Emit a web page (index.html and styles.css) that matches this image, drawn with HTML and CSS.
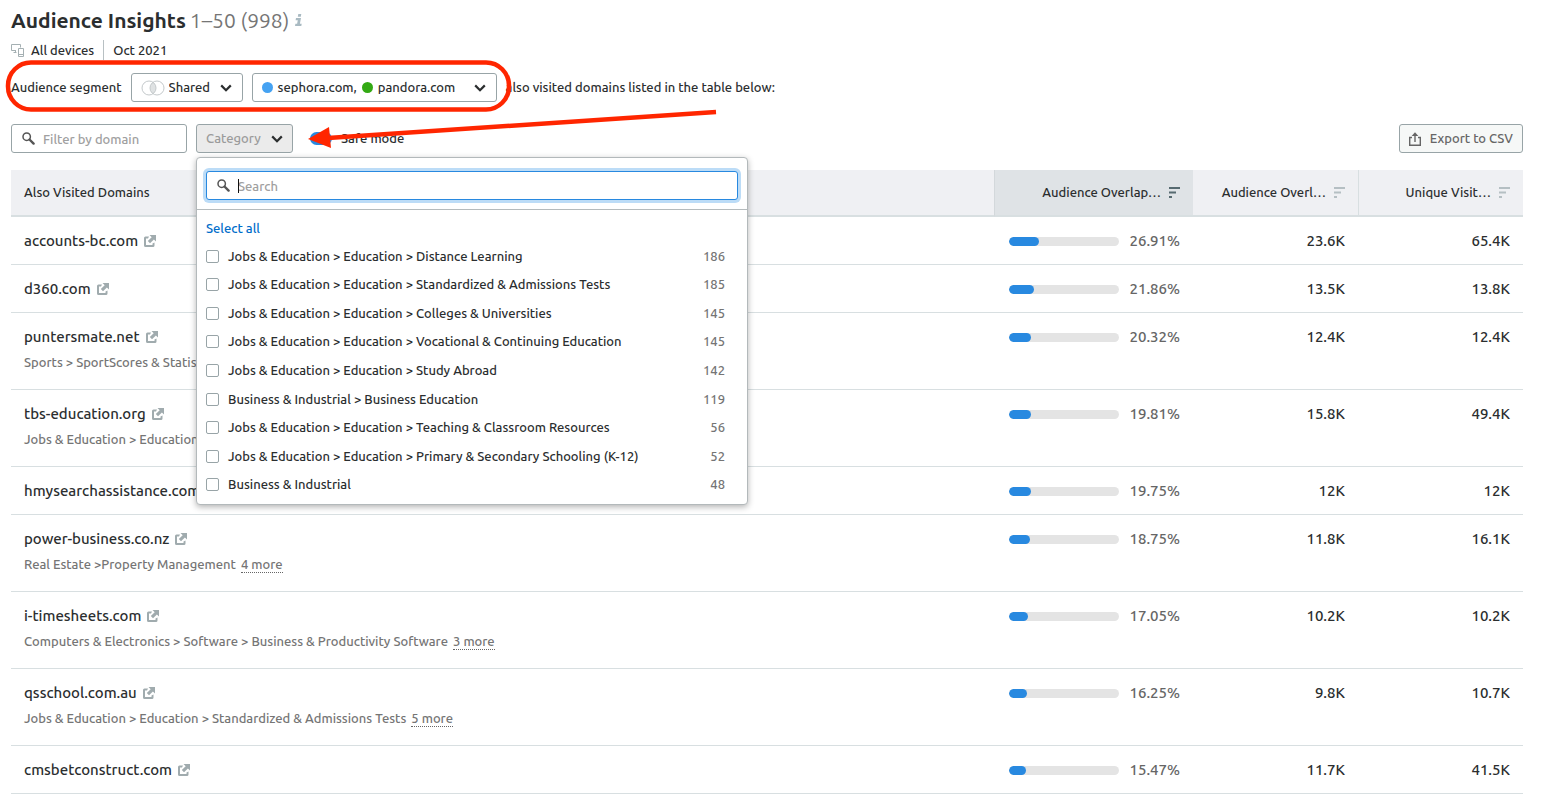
FILE: index.html
```html
<!DOCTYPE html>
<html lang="en">
<head>
<meta charset="utf-8">
<title>Audience Insights</title>
<link rel="stylesheet" href="styles.css">
</head>
<body>
<svg class="sprite" aria-hidden="true">
  <symbol id="chevron" viewBox="0 0 12 8"><path d="M1.2 1.4 6 6.2l4.800-4.800" fill="none" stroke="#2b2e2f" stroke-width="2.200"/></symbol>
  <symbol id="search" viewBox="0 0 13 13"><circle cx="4.700" cy="4.700" r="3.700" fill="none" stroke="#555" stroke-width="1.500"/><path d="M7.500 7.500 11.600 11.600" stroke="#555" stroke-width="2.400" stroke-linecap="round"/></symbol>
  <symbol id="external" viewBox="0 0 12 12"><path d="M5 1.500H1.500A1.500 1.500 0 0 0 0 3V10.500A1.500 1.500 0 0 0 1.500 12H9A1.500 1.500 0 0 0 10.500 10.500V7.500L8.500 8.500V10H2V3.500H4Z" fill="#a0abae"/><path d="M5.500 0H12V6.500L9.900 4.400 6 8.300 3.800 6.100 7.700 2.200Z" fill="#a0abae"/></symbol>
  <symbol id="sort" viewBox="0 0 11 11"><path d="M0 0h11v2H0zM0 4.500h7v2H0zM0 9h3v2H0z" fill="currentColor"/></symbol>
</svg>
<main class="page">
  <h1 class="title">Audience Insights <span class="range">1–50 (998)</span>
    <svg class="info" viewBox="0 0 8 12" role="img" aria-label="Info"><path d="M3.300 0h3l-.5 2.700H2.800zM1 4h5L4.900 9.700h1.800L6.300 12H0l.4-2.300h1.700L2.800 6.200H.6z" fill="#a9bac2"/></svg>
  </h1>
  <div class="meta">
    <span class="devices"><svg class="devices-icon" viewBox="0 0 13 13" aria-hidden="true"><path d="M5 6.500H.5V.5h9v3M2.500 8.500h3M4.500 6.500v2M7.500 12.500v-8h5v8zM7.500 10.500h5" fill="none" stroke="#a5b0b3"/></svg>All devices</span>
    <span class="date">Oct 2021</span>
  </div>
  <div class="segment">
    <label for="segment-type">Audience segment</label>
    <div class="control shared">
      <svg class="venn" viewBox="0 0 24 16" aria-hidden="true"><path d="M12 2.300a7 7 0 0 1 0 11.400 7 7 0 0 1 0-11.400" fill="#dfe2e3"/><circle cx="8" cy="8" r="7" fill="none" stroke="#c4c9cb"/><circle cx="16" cy="8" r="7" fill="none" stroke="#c4c9cb"/></svg>
      <select id="segment-type" class="shared-select"><option>Shared</option></select>
      <svg class="chevron over"><use href="#chevron"/></svg>
    </div>
    <button type="button" class="control domains">
      <span class="dot blue"></span><span>sephora.com,</span><span class="dot green"></span><span>pandora.com</span>
      <svg class="chevron push"><use href="#chevron"/></svg>
    </button>
    <span class="also">also visited domains listed in the table below:</span>
  </div>
  <div class="toolbar">
    <div class="control filter">
      <svg class="search-icon"><use href="#search"/></svg>
      <input class="text-input" type="text" placeholder="Filter by domain" aria-label="Filter by domain">
    </div>
    <div class="category">
      <button type="button" class="control category-button" aria-expanded="true">Category <svg class="chevron"><use href="#chevron"/></svg></button>
      <div class="menu">
        <div class="menu-head">
          <div class="control menu-search">
            <svg class="search-icon"><use href="#search"/></svg>
            <span class="caret"></span>
            <input class="text-input" type="text" placeholder="Search" aria-label="Search categories">
          </div>
        </div>
        <div class="menu-body">
          <button type="button" class="select-all">Select all</button>
          <div class="options">
            <label class="option"><input type="checkbox" class="check"><span>Jobs &amp; Education &gt; Education &gt; Distance Learning</span><span class="count">186</span></label>
            <label class="option"><input type="checkbox" class="check"><span>Jobs &amp; Education &gt; Education &gt; Standardized &amp; Admissions Tests</span><span class="count">185</span></label>
            <label class="option"><input type="checkbox" class="check"><span>Jobs &amp; Education &gt; Education &gt; Colleges &amp; Universities</span><span class="count">145</span></label>
            <label class="option"><input type="checkbox" class="check"><span>Jobs &amp; Education &gt; Education &gt; Vocational &amp; Continuing Education</span><span class="count">145</span></label>
            <label class="option"><input type="checkbox" class="check"><span>Jobs &amp; Education &gt; Education &gt; Study Abroad</span><span class="count">142</span></label>
            <label class="option"><input type="checkbox" class="check"><span>Business &amp; Industrial &gt; Business Education</span><span class="count">119</span></label>
            <label class="option"><input type="checkbox" class="check"><span>Jobs &amp; Education &gt; Education &gt; Teaching &amp; Classroom Resources</span><span class="count">56</span></label>
            <label class="option"><input type="checkbox" class="check"><span>Jobs &amp; Education &gt; Education &gt; Primary &amp; Secondary Schooling (K-12)</span><span class="count">52</span></label>
            <label class="option"><input type="checkbox" class="check"><span>Business &amp; Industrial</span><span class="count">48</span></label>
          </div>
        </div>
      </div>
    </div>
    <label class="safe"><input type="checkbox" class="switch" checked>Safe mode</label>
    <button type="button" class="control export"><svg class="export-icon" viewBox="0 0 12 14" aria-hidden="true"><path d="M3 5.500H.7v7.800h10.600V5.500H9M6 10V2" fill="none" stroke="#666" stroke-width="1.400"/><path d="M2.700 4 6 .3 9.300 4z" fill="#666"/></svg>Export to CSV</button>
  </div>
  <table class="table">
    <colgroup><col><col class="col-overlap"><col class="col-num"><col class="col-num"></colgroup>
    <thead>
      <tr>
        <th class="first" scope="col">Also Visited Domains</th>
        <th class="sorted" scope="col"><button type="button" class="sort">Audience Overlap… <svg class="sort-icon"><use href="#sort"/></svg></button></th>
        <th scope="col"><button type="button" class="sort">Audience Overl… <svg class="sort-icon"><use href="#sort"/></svg></button></th>
        <th class="divided" scope="col"><button type="button" class="sort">Unique Visit… <svg class="sort-icon"><use href="#sort"/></svg></button></th>
      </tr>
    </thead>
    <tbody>
      <tr><td><a class="domain" href="#">accounts-bc.com<svg class="ext"><use href="#external"/></svg></a></td><td><div class="overlap"><span class="bar"><span class="fill" style="width:27%"></span></span>26.91%</div></td><td>23.6K</td><td>65.4K</td></tr>
      <tr><td><a class="domain" href="#">d360.com<svg class="ext"><use href="#external"/></svg></a></td><td><div class="overlap"><span class="bar"><span class="fill" style="width:22%"></span></span>21.86%</div></td><td>13.5K</td><td>13.8K</td></tr>
      <tr class="tall"><td><a class="domain" href="#">puntersmate.net<svg class="ext"><use href="#external"/></svg></a><div class="sub">Sports &gt; SportScores &amp; Statistics</div></td><td><div class="overlap"><span class="bar"><span class="fill" style="width:20%"></span></span>20.32%</div></td><td>12.4K</td><td>12.4K</td></tr>
      <tr class="tall"><td><a class="domain" href="#">tbs-education.org<svg class="ext"><use href="#external"/></svg></a><div class="sub">Jobs &amp; Education &gt; Education</div></td><td><div class="overlap"><span class="bar"><span class="fill" style="width:20%"></span></span>19.81%</div></td><td>15.8K</td><td>49.4K</td></tr>
      <tr><td><a class="domain" href="#">hmysearchassistance.com<svg class="ext"><use href="#external"/></svg></a></td><td><div class="overlap"><span class="bar"><span class="fill" style="width:20%"></span></span>19.75%</div></td><td>12K</td><td>12K</td></tr>
      <tr class="tall"><td><a class="domain" href="#">power-business.co.nz<svg class="ext"><use href="#external"/></svg></a><div class="sub">Real Estate &gt;Property Management <button type="button" class="more">4 more</button></div></td><td><div class="overlap"><span class="bar"><span class="fill" style="width:19%"></span></span>18.75%</div></td><td>11.8K</td><td>16.1K</td></tr>
      <tr class="tall"><td><a class="domain" href="#">i-timesheets.com<svg class="ext"><use href="#external"/></svg></a><div class="sub">Computers &amp; Electronics &gt; Software &gt; Business &amp; Productivity Software <button type="button" class="more">3 more</button></div></td><td><div class="overlap"><span class="bar"><span class="fill" style="width:17%"></span></span>17.05%</div></td><td>10.2K</td><td>10.2K</td></tr>
      <tr class="tall"><td><a class="domain" href="#">qsschool.com.au<svg class="ext"><use href="#external"/></svg></a><div class="sub">Jobs &amp; Education &gt; Education &gt; Standardized &amp; Admissions Tests <button type="button" class="more">5 more</button></div></td><td><div class="overlap"><span class="bar"><span class="fill" style="width:16%"></span></span>16.25%</div></td><td>9.8K</td><td>10.7K</td></tr>
      <tr><td><a class="domain" href="#">cmsbetconstruct.com<svg class="ext"><use href="#external"/></svg></a></td><td><div class="overlap"><span class="bar"><span class="fill" style="width:15%"></span></span>15.47%</div></td><td>11.7K</td><td>41.5K</td></tr>
    </tbody>
  </table>
</main>
<svg class="annotation" viewBox="0 0 730 160" aria-hidden="true">
  <rect x="8" y="62.500" width="501" height="47" rx="23" fill="none" stroke="#ff2600" stroke-width="4.500"/>
  <path d="M716 112 328 138" stroke="#ff2600" stroke-width="4.500"/>
  <path d="M308 139 329 127 331 148z" fill="#ff2600"/>
</svg>
</body>
</html>
```
FILE: styles.css
```css
* { box-sizing: border-box; }
body {
  margin: 0;
  position: relative;
  background: #fff;
  color: #2b2e2f;
  font: 500 13px/20px Ubuntu, "Open Sans", sans-serif;
}
button, input, select { font: inherit; color: inherit; }
button { cursor: pointer; }
svg { flex: none; }
.sprite { position: absolute; width: 0; height: 0; }
.page { padding: 6px 24px 0 11px; }
.title { display: flex; align-items: center; gap: 4px; margin: 0; font-size: 21px; line-height: 28px; font-weight: 700; }
.range { font-weight: 400; color: #757575; }
.info { width: 8px; height: 12px; margin-left: 2px; }
.meta { display: flex; align-items: center; margin-top: 6px; }
.devices { display: flex; align-items: center; gap: 7px; padding-right: 9px; border-right: 1px solid #b8c0c3; }
.devices-icon { width: 13px; height: 13px; }
.date { padding-left: 9px; }

.control {
  display: flex;
  align-items: center;
  height: 29px;
  padding: 0 10px;
  border: 1px solid #98a4a7;
  border-radius: 3px;
  background: #fff;
  line-height: 19px;
}
.chevron { width: 12px; height: 8px; }
.segment { display: flex; align-items: center; gap: 9px; margin-top: 13px; line-height: 19px; }
.shared { position: relative; width: 112px; padding: 0; }
.venn { position: absolute; left: 9px; width: 24px; height: 16px; pointer-events: none; }
.over { position: absolute; right: 10px; pointer-events: none; }
.shared-select { appearance: none; width: 100%; height: 27px; padding: 0 24px 0 37px; border: 0; background: transparent; }
.domains { width: 245px; padding: 0 10px 0 9px; gap: 5px; }
.dot { width: 11px; height: 11px; border-radius: 50%; }
.blue { background: #45a2f2; }
.green { background: #33a914; }
.push { margin-left: auto; }

.toolbar { display: flex; align-items: center; gap: 9px; margin-top: 22px; line-height: 19px; }
.filter { width: 176px; gap: 8px; }
.search-icon { width: 13px; height: 13px; }
.text-input { flex: 1; min-width: 0; height: 100%; padding: 0; border: 0; outline: 0; background: transparent; }
.text-input::placeholder { color: #a0a0a0; opacity: 1; }
.category { position: relative; }
.category-button { width: 97px; padding: 0 9px; justify-content: space-between; background: #ebebeb; color: #9b9b9b; }
.safe { display: flex; align-items: center; gap: 9px; margin-left: 8px; }
.switch { appearance: none; width: 22px; height: 13px; margin: 0; border-radius: 7px; background: radial-gradient(circle at 15px 6px, #fff 4px, #2889e0 5px); }
.export { margin-left: auto; padding: 0 9px; gap: 9px; background: #f6f8f7; color: #666; }
.export-icon { width: 12px; height: 14px; }

.menu {
  position: absolute;
  top: 33px;
  left: 0;
  z-index: 2;
  width: 552px;
  border: 1px solid #b3b9bb;
  border-radius: 4px;
  background: #fff;
  box-shadow: 0 2px 6px rgba(0, 0, 0, .3);
}
.menu-head { padding: 13px 9px 9px; border-bottom: 1px solid #b5bbbd; }
.menu-search { position: relative; gap: 8px; border-color: #2889e0; box-shadow: 0 0 0 3px #bcdcf7; }
.caret { position: absolute; left: 31px; width: 1px; height: 14px; background: #111; }
.menu-body { padding: 8px 9px 5px; }
.select-all { display: block; margin-bottom: 4px; padding: 0; border: 0; background: none; color: #006dca; line-height: 20px; }
.options { display: grid; grid-auto-rows: 1fr; height: 257px; }
.option { display: flex; align-items: center; gap: 9px; padding-right: 13px; }
.check { appearance: none; flex: none; width: 13px; height: 13px; margin: 0; border: 1px solid #98a4a7; border-radius: 2px; background: #fff; }
.count { margin-left: auto; color: #757575; }

.table { width: 100%; margin-top: 17px; border-collapse: separate; border-spacing: 0; table-layout: fixed; }
.col-overlap { width: 199px; }
.col-num { width: 165px; }
th { height: 47px; padding: 0 13px; border-bottom: 2px solid #d8dfe1; background: #eff0f3; font-weight: 500; line-height: 19px; text-align: right; }
.first { text-align: left; }
.sorted { background: #dfe3e6; border-left: 1px solid #d3d8db; color: inherit; }
.divided { border-left: 1px solid #d8dfe1; }
.sort { display: flex; align-items: center; justify-content: flex-end; gap: 8px; width: 100%; padding: 0; border: 0; background: none; white-space: nowrap; }
.sort-icon { width: 11px; height: 11px; color: #b5bfc3; }
.sorted .sort-icon { color: #566a70; }
td { height: 48px; padding: 12px 13px 11px; border-bottom: 1px solid #d8dfe1; vertical-align: top; text-align: right; font-size: 15px; line-height: 24px; }
td:first-child { text-align: left; }
.tall td { height: 77px; }
.domain { display: inline-flex; align-items: center; gap: 6px; color: inherit; text-decoration: none; }
.ext { width: 12px; height: 12px; }
.sub { margin-top: 2px; color: #757575; font-size: 13px; line-height: 22px; }
.more { margin-left: 2px; padding: 0; border: 0; border-bottom: 1px dotted #666; background: none; line-height: 15px; }
.overlap { display: flex; align-items: center; justify-content: flex-end; gap: 10px; color: #666; }
.bar { flex: none; width: 110px; height: 9px; border-radius: 5px; background: #e4e4e4; overflow: hidden; }
.fill { display: block; height: 100%; border-radius: 5px; background: #2889e0; }
.annotation { position: absolute; top: 0; left: 0; z-index: 1; width: 730px; height: 160px; pointer-events: none; }
```
